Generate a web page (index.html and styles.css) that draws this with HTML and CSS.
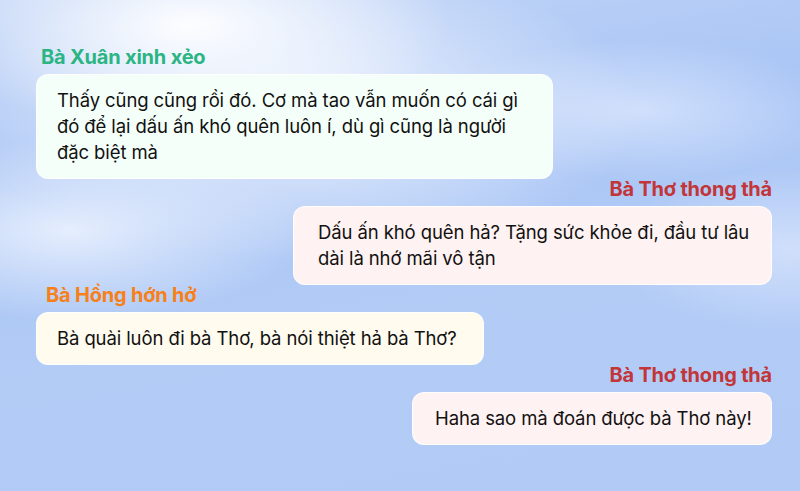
FILE: index.html
```html
<!DOCTYPE html>
<html lang="vi">
<head>
    <meta charset="UTF-8">
    <meta name="viewport" content="width=device-width, initial-scale=1.0">
    <title>Nhóm chat</title>
    <link rel="stylesheet" href="styles.css">
</head>
<body>
    <div class="chat">
        <div class="message">
            <p class="name name--xuan">Bà Xuân xinh xẻo</p>
            <div class="bubble bubble--xuan">Thấy cũng cũng rồi đó. Cơ mà tao vẫn muốn có cái gì đó để lại dấu ấn khó quên luôn í, dù gì cũng là người đặc biệt mà</div>
        </div>

        <div class="message message--right">
            <p class="name name--tho">Bà Thơ thong thả</p>
            <div class="bubble bubble--tho bubble--long">Dấu ấn khó quên hả? Tặng sức khỏe đi, đầu tư lâu dài là nhớ mãi vô tận</div>
        </div>

        <div class="message">
            <p class="name name--hong">Bà Hồng hớn hở</p>
            <div class="bubble bubble--hong">Bà quài luôn đi bà Thơ, bà nói thiệt hả bà Thơ?</div>
        </div>

        <div class="message message--right">
            <p class="name name--tho">Bà Thơ thong thả</p>
            <div class="bubble bubble--tho bubble--short">Haha sao mà đoán được bà Thơ này!</div>
        </div>
    </div>
</body>
</html>
```

FILE: styles.css
```css
html, body {
    height: 100%;
}

body {
    margin: 0;
    font-family: 'Inter', 'Noto Sans', sans-serif;
    color: #111;
    background:
        radial-gradient(ellipse 260px 110px at 190px 25px, rgba(255, 255, 255, 0.95), rgba(255, 255, 255, 0) 100%),
        radial-gradient(ellipse 340px 150px at 300px 110px, rgba(245, 248, 255, 0.9), rgba(245, 248, 255, 0) 100%),
        radial-gradient(ellipse 240px 90px at 70px 230px, rgba(240, 245, 255, 0.85), rgba(240, 245, 255, 0) 100%),
        radial-gradient(ellipse 200px 70px at 640px 110px, rgba(225, 235, 255, 0.7), rgba(225, 235, 255, 0) 100%),
        radial-gradient(ellipse 180px 80px at 790px 250px, rgba(215, 228, 252, 0.8), rgba(215, 228, 252, 0) 100%),
        linear-gradient(170deg, #c3d6f7 0%, #a9c5f5 35%, #b3ccf6 60%, #b2cbf6 100%);
    overflow: hidden;
}

.chat {
    display: flex;
    flex-direction: column;
    padding: 47px 28px 0 36px;
}

.message {
    display: flex;
    flex-direction: column;
    align-items: flex-start;
}

.message--right {
    align-items: flex-end;
}

.name {
    margin: 0 0 7px;
    font-size: 20px;
    line-height: 20px;
    font-weight: 700;
    letter-spacing: -0.2px;
}

.name--xuan {
    color: #2bb584;
    padding-left: 5px;
}

.name--tho {
    color: #c23539;
}

.name--hong {
    color: #f78019;
    padding-left: 10px;
}

.bubble {
    box-sizing: border-box;
    padding: 12px 16px 13px 20px;
    border-radius: 12px;
    border: 1px solid rgba(255, 255, 255, 0.85);
    font-size: 18.5px;
    line-height: 26px;
    letter-spacing: -0.1px;
}

.bubble--xuan {
    width: 517px;
    background: #f5fff9;
}

.bubble--hong {
    width: 448px;
    background: #fffbef;
}

.bubble--tho {
    background: #fff2f2;
}

.bubble--long {
    width: 479px;
    padding-left: 24px;
}

.bubble--short {
    width: 360px;
    padding: 12px 8px 13px 22px;
}
```
